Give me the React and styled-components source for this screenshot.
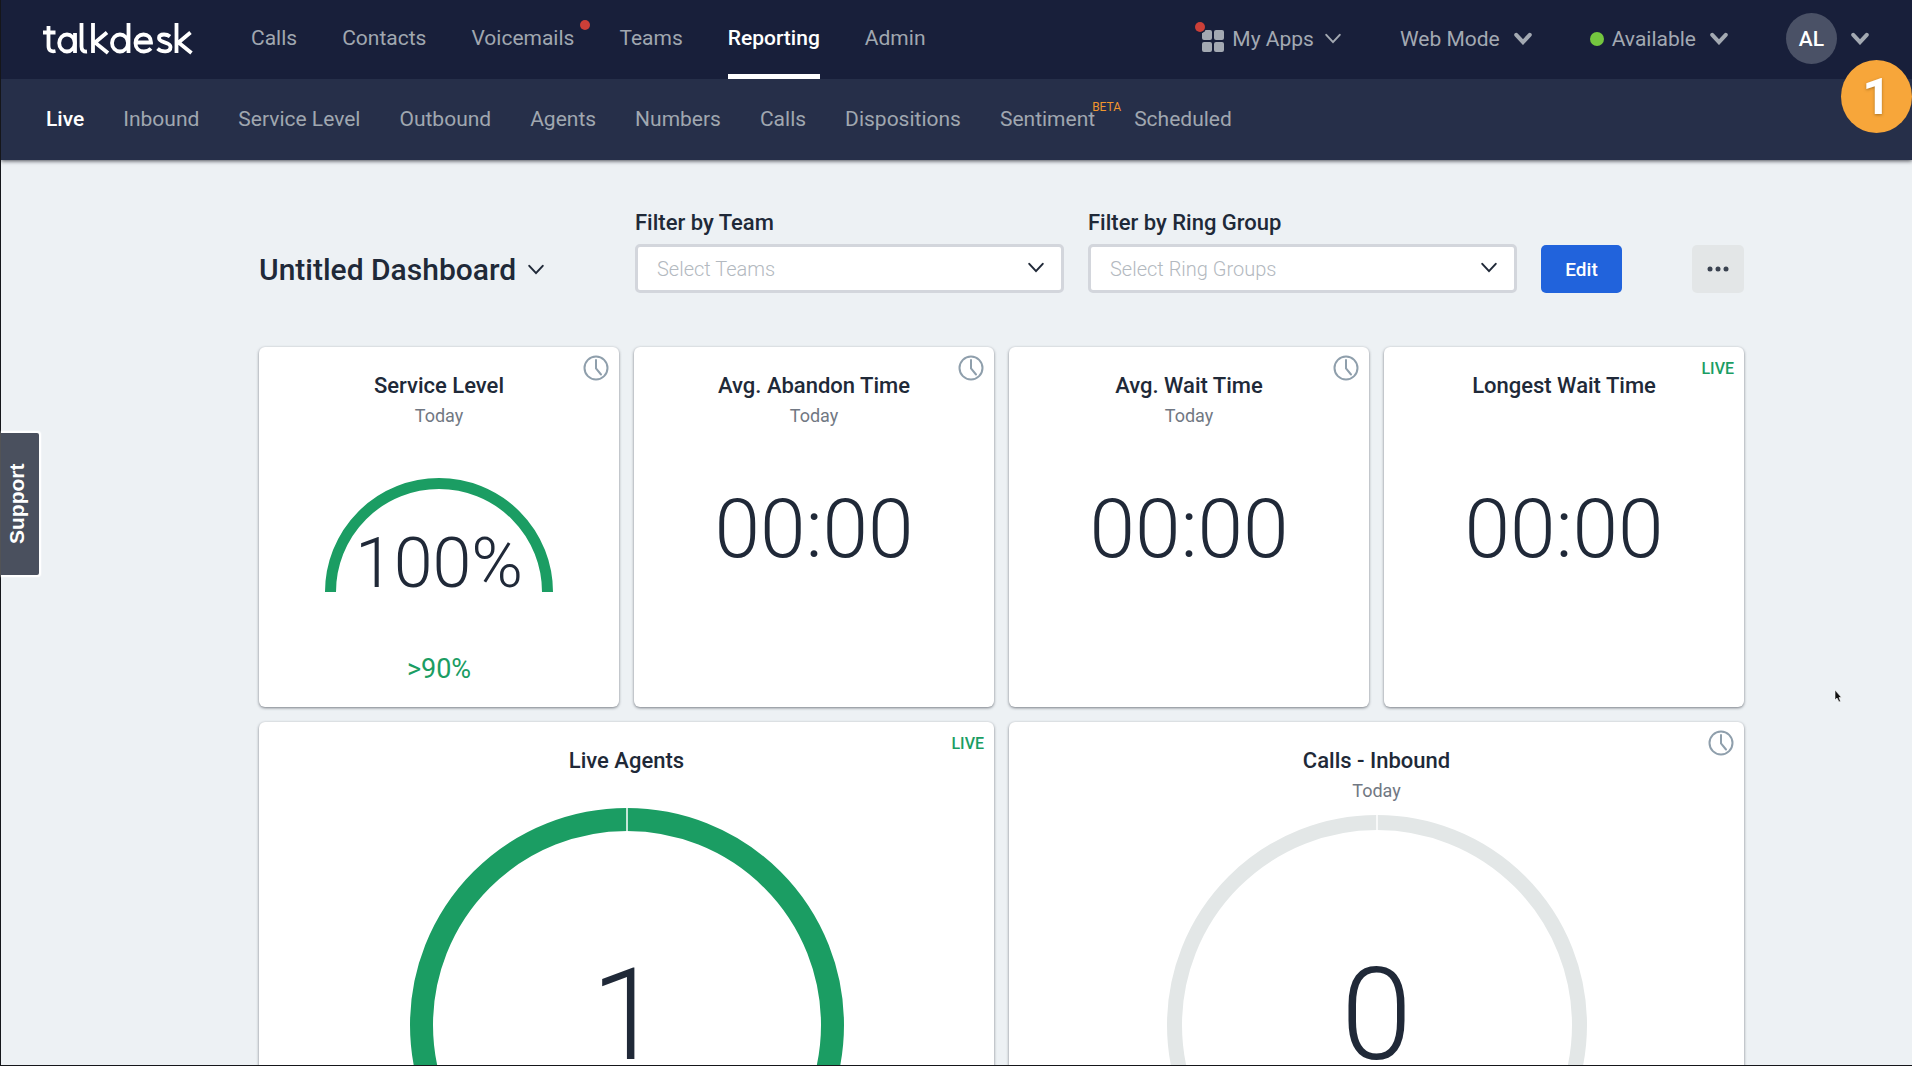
import React from "react";
import styled, { createGlobalStyle } from "styled-components";

const GlobalStyle = createGlobalStyle`
  *, *::before, *::after { box-sizing: border-box; }
  html, body { margin: 0; padding: 0; }
  html { height: 100%; overflow: hidden; }
  body {
    height: 100vh;
    overflow: hidden;
    background: #edf1f4;
    color: #202938;
    font-family: Roboto, "Liberation Sans", sans-serif;
  }
  #root { height: 100%; }
  button, select { font-family: inherit; }
`;

const Page = styled.div`
  height: 100vh;
  overflow: hidden;
  border-left: 1px solid #15161a;
  border-bottom: 1px solid #15161a;
`;

const Header = styled.header`
  position: relative;
  box-shadow: 0 1px 4px rgba(20, 22, 30, 0.75);
`;

const TopBar = styled.div`
  display: flex;
  align-items: stretch;
  height: 79px;
  padding: 0 43px 0 42px;
  background: #181f3a;
`;

const SubBar = styled.nav`
  display: flex;
  align-items: center;
  gap: 39px;
  height: 81px;
  padding: 0 45px 1px;
  background: #262f49;
`;

const Logo = styled.a`
  display: flex;
  align-items: center;
  width: 152px;
  margin-right: 56px;
  padding-bottom: 2px;
`;

const MainNav = styled.nav`
  display: flex;
  flex: 1;
  gap: 45px;
`;

const NavLink = styled.a`
  position: relative;
  display: flex;
  align-items: center;
  font-size: 21px;
  line-height: 24px;
  font-weight: ${(p) => (p.$active ? 500 : 400)};
  color: ${(p) => (p.$active ? "#ffffff" : "#a0a7b0")};
  text-decoration: none;
`;

const MainLink = styled(NavLink)`
  padding-bottom: 3px;
  ${(p) => p.$active && "box-shadow: inset 0 -5px 0 #ffffff;"}
`;

const NavDot = styled.i`
  position: absolute;
  top: 20px;
  right: -16px;
  width: 10px;
  height: 10px;
  border-radius: 50%;
  background: #cb3f38;
`;

const Beta = styled.sup`
  position: absolute;
  left: calc(100% - 3px);
  top: -6px;
  font-size: 12px;
  line-height: 12px;
  color: #f0962e;
`;

const Tools = styled.div`
  display: flex;
  align-items: center;
  gap: 58px;
  padding-bottom: 2px;
`;

const ToolButton = styled.button`
  display: flex;
  align-items: center;
  gap: ${(p) => (p.$tight ? 10 : 14)}px;
  padding: 0;
  border: 0;
  background: none;
  font-size: 21px;
  line-height: 24px;
  color: #a3a9b2;
`;

const ToolLabel = styled.span`
  display: flex;
  align-items: center;
  gap: ${(p) => p.$gap}px;
`;

const StatusDot = styled.i`
  width: 14px;
  height: 14px;
  border-radius: 50%;
  background: #74c63f;
`;

const Avatar = styled.span`
  display: grid;
  place-items: center;
  width: 51px;
  height: 51px;
  border-radius: 50%;
  background: #4a5166;
  color: #ffffff;
  font-size: 21px;
  font-weight: 500;
`;

const StepBadge = styled.div`
  position: absolute;
  top: 60px;
  right: 0;
  display: grid;
  place-items: center;
  width: 71px;
  height: 73px;
  border-radius: 50%;
  background: #f7a63a;
  color: #ffffff;
  font-size: 50px;
  line-height: 56px;
  font-weight: 700;
  text-shadow: 0 1px 3px rgba(90, 60, 10, 0.5);
`;

const SupportTab = styled.button`
  position: absolute;
  left: 1px;
  top: 431px;
  display: grid;
  place-items: center;
  width: 40px;
  height: 146px;
  padding: 0 0 0 6px;
  border: 2px solid #ffffff;
  border-right: 0;
  border-radius: 4px 0 0 4px;
  background: #4a505e;
  box-shadow: 0 0 2px #ffffff;
  color: #ffffff;
  font: 700 21px/24px "Liberation Sans", sans-serif;
  writing-mode: vertical-rl;
  rotate: 180deg;
`;

const Main = styled.main`
  padding: 50px 168px 0 258px;
`;

const Toolbar = styled.section`
  display: flex;
  align-items: flex-end;
`;

const TitleButton = styled.button`
  display: flex;
  align-items: center;
  gap: 11px;
  flex: 1;
  height: 46px;
  padding: 0;
  border: 0;
  background: none;
  color: #202938;
  font-size: 30px;
  font-weight: 500;
  line-height: 36px;
  white-space: nowrap;
`;

const Field = styled.div`
  display: flex;
  flex-direction: column;
  gap: 8px;
  width: 429px;
  margin-right: 24px;
`;

const FieldLabel = styled.label`
  font-size: 22px;
  line-height: 26px;
  font-weight: 500;
`;

const SelectWrap = styled.div`
  position: relative;
  display: flex;
  svg { position: absolute; right: 19px; top: 17px; pointer-events: none; }
`;

const Select = styled.select`
  appearance: none;
  width: 100%;
  height: 49px;
  padding: 0 19px;
  border: 3px solid #d3d6dc;
  border-radius: 5px;
  background: #ffffff;
  color: #b3b9c0;
  font-size: 20px;
  font-weight: 300;
`;

const EditButton = styled.button`
  width: 81px;
  height: 48px;
  margin-right: 70px;
  border: 0;
  border-radius: 5px;
  background: #2163dc;
  color: #ffffff;
  font-size: 19px;
  font-weight: 500;
`;

const MoreButton = styled.button`
  display: grid;
  place-items: center;
  width: 52px;
  height: 48px;
  padding: 0;
  border: 0;
  border-radius: 5px;
  background: #e3e6e7;
`;

const Board = styled.section`
  display: grid;
  grid-template-columns: repeat(4, 1fr);
  gap: 15px;
  margin-top: 54px;
`;

const Card = styled.article`
  position: relative;
  display: flex;
  flex-direction: column;
  align-items: center;
  grid-column: span ${(p) => p.$span || 1};
  height: ${(p) => (p.$span ? 735 : 360)}px;
  padding-top: 26px;
  border-radius: 6px;
  background: #ffffff;
  box-shadow: 0 1px 3px rgba(40, 46, 56, 0.6);
`;

const CardTitle = styled.h2`
  margin: 0;
  font-size: 22px;
  line-height: 26px;
  font-weight: 500;
`;

const CardPeriod = styled.p`
  height: 21px;
  margin: 6px 0 0;
  font-size: 18px;
  line-height: 21px;
  color: #717883;
`;

const Corner = styled.span`
  position: absolute;
  top: 8px;
  right: 10px;
  display: flex;
  align-items: center;
  height: 26px;
  font-size: 16px;
  font-weight: 500;
  color: #1b9d63;
`;

const Clock = styled.p`
  margin: 56px 0 0;
  font-size: 82px;
  line-height: 94px;
  font-weight: 300;
`;

const Gauge = styled.div`
  position: relative;
  display: flex;
  justify-content: center;
  margin-top: ${(p) => p.$top}px;
  svg { display: block; }
`;

const GaugeValue = styled.span`
  position: absolute;
  bottom: ${(p) => p.$bottom}px;
  font-size: ${(p) => p.$size}px;
  line-height: 1;
  font-weight: 300;
`;

const Target = styled.p`
  margin: 61px 0 0;
  font-size: 27px;
  line-height: 32px;
  color: #1b9d63;
`;

const Cursor = styled.svg`
  position: absolute;
  left: 1834px;
  top: 689px;
`;

const Chevron = ({ w = 18, stroke = 3 }) => (
  <svg width={w} height={w * 0.75} viewBox="0 0 16 12" fill="none" stroke="currentColor" strokeWidth={(stroke * 16) / w} strokeLinecap="round" aria-hidden="true">
    <path d="M2 2.500 8 9l6-6.500" />
  </svg>
);

const ClockIcon = () => (
  <svg width="26" height="26" viewBox="0 0 26 26" fill="none" stroke="#8f9fac" strokeWidth="2" strokeLinecap="round">
    <circle cx="13" cy="13" r="11.500" />
    <path d="M13 5v8.500l5 6" />
  </svg>
);

const AppsIcon = () => (
  <svg width="32" height="34" viewBox="0 0 32 34" aria-hidden="true">
    <g fill="#a3a9b2">
      <rect x="8" y="8" width="10" height="10" rx="2" />
      <rect x="20" y="8" width="10" height="10" rx="2" />
      <rect x="8" y="20" width="10" height="10" rx="2" />
      <rect x="20" y="20" width="10" height="10" rx="2" />
    </g>
    <circle cx="6" cy="5" r="6.500" fill="#181f3a" />
    <circle cx="6" cy="5" r="5" fill="#cb3f38" />
  </svg>
);

const LogoMark = () => (
  <svg width="150" height="34" viewBox="0 0 150 34" fill="none" stroke="#ffffff" strokeWidth="3.800" role="img" aria-label="talkdesk">
    <path d="M5.500 4v20q0 6.500 7 5M0 10.500h12.500" />
    <ellipse cx="24" cy="21" rx="7.800" ry="8.500" />
    <path d="M32 11v20M38.500 1v23.500q0 5.500 5.500 5M50 1v30M64 10.500 52 20.500 65 31" />
    <ellipse cx="77" cy="21" rx="8" ry="8.500" />
    <path d="M85.500 1v30M92.500 20.500h15.500c0-5-3-8-7.500-8s-8 3.500-8 8.500 3.500 8.500 8.500 8.500c3 0 5-1 7-3" />
    <path d="M127 14.500q-2.500-2-6-2-5 0-5 3.600c0 5.500 11.500 3 11.500 9 0 5.500-8.500 5.500-13 1.500M133.500 1v30M147.500 10.500 135.500 20.500 148.500 31" />
  </svg>
);

const HalfRing = () => (
  <svg width="228" height="114" viewBox="0 0 228 114">
    <path d="M5.500 114a108.500 108.500 0 0 1 217 0" fill="none" stroke="#1b9d63" strokeWidth="11" />
  </svg>
);

const FullRing = ({ size, width, color }) => (
  <svg width={size} height={size} viewBox={`0 0 ${size} ${size}`}>
    <circle cx={size / 2} cy={size / 2} r={(size - width) / 2} fill="none" stroke={color} strokeWidth={width} />
    <path d={`M${size / 2} 0v${width}`} stroke="#ffffff" strokeWidth="1.500" />
  </svg>
);

const mainLinks = ["Calls", "Contacts", "Voicemails", "Teams", "Reporting", "Admin"];
const subLinks = ["Live", "Inbound", "Service Level", "Outbound", "Agents", "Numbers", "Calls", "Dispositions", "Sentiment", "Scheduled"];

const Filter = ({ id, label, placeholder }) => (
  <Field>
    <FieldLabel htmlFor={id}>{label}</FieldLabel>
    <SelectWrap>
      <Select id={id}>
        <option>{placeholder}</option>
      </Select>
      <Chevron stroke={2} />
    </SelectWrap>
  </Field>
);

const Widget = ({ title, period, live, span, children }) => (
  <Card $span={span}>
    <Corner>{live ? "LIVE" : <ClockIcon />}</Corner>
    <CardTitle>{title}</CardTitle>
    <CardPeriod>{period}</CardPeriod>
    {children}
  </Card>
);

export default function App() {
  return (
    <>
      <GlobalStyle />
      <Page>
        <Header>
          <TopBar>
            <Logo href="#"><LogoMark /></Logo>
            <MainNav>
              {mainLinks.map((name) => (
                <MainLink key={name} href="#" $active={name === "Reporting"}>
                  {name}
                  {name === "Voicemails" && <NavDot />}
                </MainLink>
              ))}
            </MainNav>
            <Tools>
              <ToolButton $tight><ToolLabel $gap={6}><AppsIcon />My Apps</ToolLabel><Chevron stroke={2} /></ToolButton>
              <ToolButton>Web Mode<Chevron stroke={4} /></ToolButton>
              <ToolButton><ToolLabel $gap={8}><StatusDot />Available</ToolLabel><Chevron stroke={4} /></ToolButton>
              <ToolButton aria-label="Account"><Avatar>AL</Avatar><Chevron stroke={4} /></ToolButton>
            </Tools>
          </TopBar>
          <SubBar>
            {subLinks.map((name) => (
              <NavLink key={name} href="#" $active={name === "Live"}>
                {name}
                {name === "Sentiment" && <Beta>BETA</Beta>}
              </NavLink>
            ))}
          </SubBar>
          <StepBadge>1</StepBadge>
        </Header>
        <Main>
          <Toolbar>
            <TitleButton>Untitled Dashboard<Chevron stroke={2} /></TitleButton>
            <Filter id="team" label="Filter by Team" placeholder="Select Teams" />
            <Filter id="ring" label="Filter by Ring Group" placeholder="Select Ring Groups" />
            <EditButton>Edit</EditButton>
            <MoreButton aria-label="More options">
              <svg width="22" height="6" viewBox="0 0 22 6" fill="#3a4250">
                <circle cx="3" cy="3" r="2.500" /><circle cx="11" cy="3" r="2.500" /><circle cx="19" cy="3" r="2.500" />
              </svg>
            </MoreButton>
          </Toolbar>
          <Board>
            <Widget title="Service Level" period="Today">
              <Gauge $top={52}><HalfRing /><GaugeValue $size={70} $bottom={-6}>100%</GaugeValue></Gauge>
              <Target>&gt;90%</Target>
            </Widget>
            <Widget title="Avg. Abandon Time" period="Today"><Clock>00:00</Clock></Widget>
            <Widget title="Avg. Wait Time" period="Today"><Clock>00:00</Clock></Widget>
            <Widget title="Longest Wait Time" live><Clock>00:00</Clock></Widget>
            <Widget title="Live Agents" live span={2}>
              <Gauge $top={7}><FullRing size={434} width={23} color="#1b9d63" /><GaugeValue $size={128} $bottom={163}>1</GaugeValue></Gauge>
            </Widget>
            <Widget title="Calls - Inbound" period="Today" span={2}>
              <Gauge $top={14}><FullRing size={420} width={15} color="#e3e7e7" /><GaugeValue $size={128} $bottom={156}>0</GaugeValue></Gauge>
            </Widget>
          </Board>
        </Main>
        <SupportTab>Support</SupportTab>
        <Cursor width="8" height="14" viewBox="0 0 8 14" aria-hidden="true">
          <path d="M1 1v10l2-2 2 4 1.500-.8L5 8.500h2.500z" fill="#111111" stroke="#ffffff" strokeWidth=".6" />
        </Cursor>
      </Page>
    </>
  );
}
